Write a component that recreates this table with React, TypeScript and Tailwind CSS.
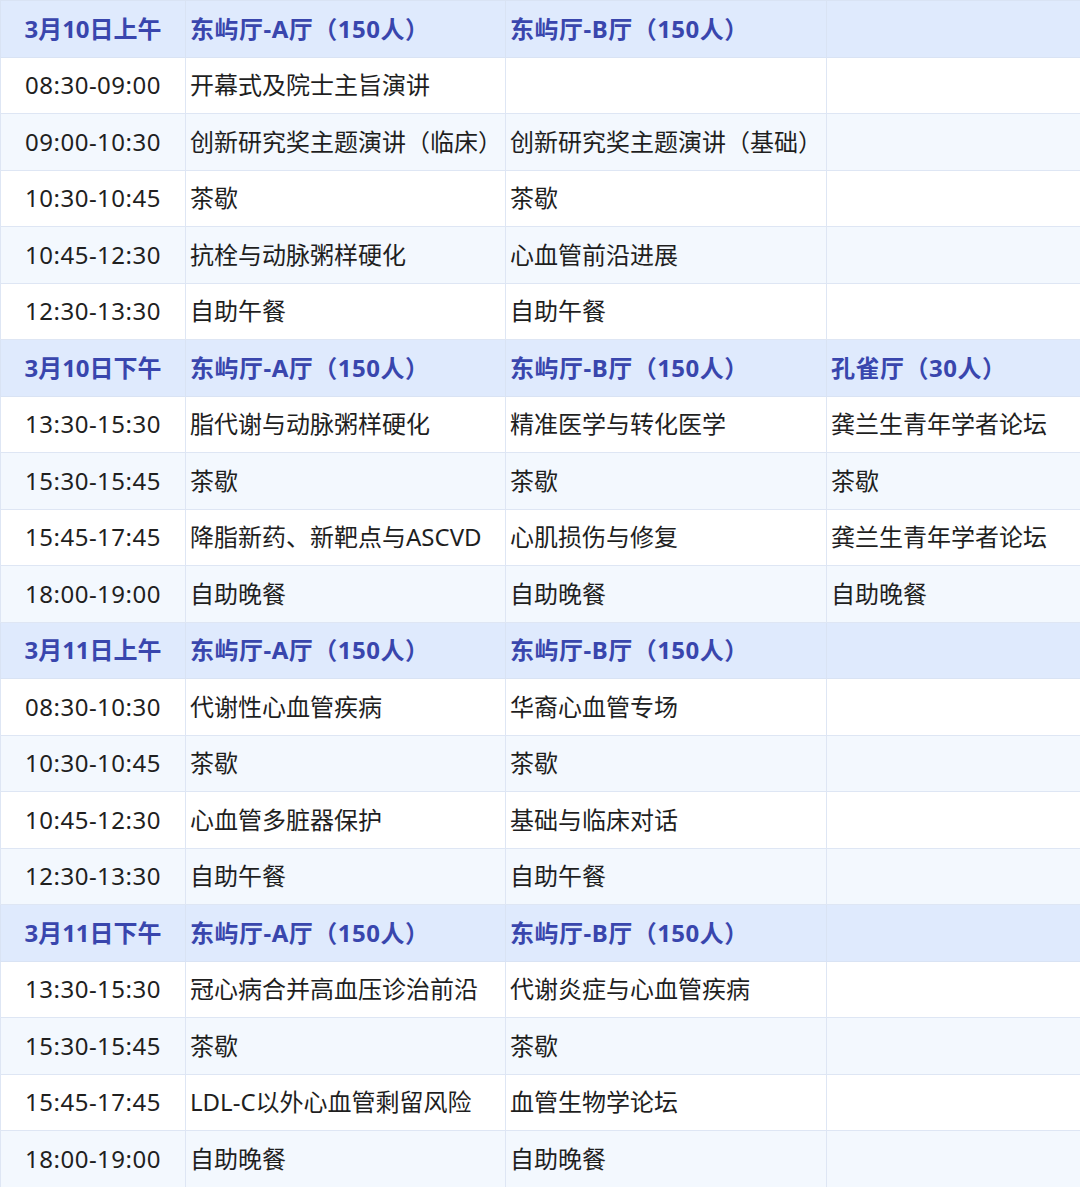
type Row = [string, string, string, string];

type Section = {
  head: Row;
  rows: Row[];
};

const sections: Section[] = [
  {
    head: ['3月10日上午', '东屿厅-A厅（150人）', '东屿厅-B厅（150人）', ''],
    rows: [
      ['08:30-09:00', '开幕式及院士主旨演讲', '', ''],
      ['09:00-10:30', '创新研究奖主题演讲（临床）', '创新研究奖主题演讲（基础）', ''],
      ['10:30-10:45', '茶歇', '茶歇', ''],
      ['10:45-12:30', '抗栓与动脉粥样硬化', '心血管前沿进展', ''],
      ['12:30-13:30', '自助午餐', '自助午餐', ''],
    ],
  },
  {
    head: ['3月10日下午', '东屿厅-A厅（150人）', '东屿厅-B厅（150人）', '孔雀厅（30人）'],
    rows: [
      ['13:30-15:30', '脂代谢与动脉粥样硬化', '精准医学与转化医学', '龚兰生青年学者论坛'],
      ['15:30-15:45', '茶歇', '茶歇', '茶歇'],
      ['15:45-17:45', '降脂新药、新靶点与ASCVD', '心肌损伤与修复', '龚兰生青年学者论坛'],
      ['18:00-19:00', '自助晚餐', '自助晚餐', '自助晚餐'],
    ],
  },
  {
    head: ['3月11日上午', '东屿厅-A厅（150人）', '东屿厅-B厅（150人）', ''],
    rows: [
      ['08:30-10:30', '代谢性心血管疾病', '华裔心血管专场', ''],
      ['10:30-10:45', '茶歇', '茶歇', ''],
      ['10:45-12:30', '心血管多脏器保护', '基础与临床对话', ''],
      ['12:30-13:30', '自助午餐', '自助午餐', ''],
    ],
  },
  {
    head: ['3月11日下午', '东屿厅-A厅（150人）', '东屿厅-B厅（150人）', ''],
    rows: [
      ['13:30-15:30', '冠心病合并高血压诊治前沿', '代谢炎症与心血管疾病', ''],
      ['15:30-15:45', '茶歇', '茶歇', ''],
      ['15:45-17:45', 'LDL-C以外心血管剩留风险', '血管生物学论坛', ''],
      ['18:00-19:00', '自助晚餐', '自助晚餐', ''],
    ],
  },
];

export default function App() {
  return (
    <div className="w-[1080px] h-[1187px] bg-white overflow-hidden font-['Noto_Sans','Noto_Sans_CJK_SC',sans-serif]">
      <table className="w-[1080px] table-fixed border-collapse">
        <colgroup>
          <col className="w-[185px]" />
          <col className="w-[320px]" />
          <col className="w-[321px]" />
          <col className="w-[254px]" />
        </colgroup>
        <tbody>
          {sections.map((s, si) => (
            <SectionRows key={si} section={s} />
          ))}
        </tbody>
      </table>
    </div>
  );
}

function SectionRows({ section }: { section: Section }) {
  return (
    <>
      <tr className="h-[56.5px] bg-[#dfeafd]">
        {section.head.map((t, i) => (
          <td
            key={i}
            className={
              'border border-[#d9e3f4] p-0 text-[24px] font-bold text-[#3946ad] whitespace-nowrap ' +
              (i === 0 ? 'text-center' : 'pl-[4px] tracking-[0.5px]')
            }
          >
            {t}
          </td>
        ))}
      </tr>
      {section.rows.map((r, ri) => (
        <tr key={ri} className={'h-[56.5px] ' + (ri % 2 === 0 ? 'bg-white' : 'bg-[#f3f8fe]')}>
          {r.map((t, i) => (
            <td
              key={i}
              className={
                'border border-[#dee6f4] p-0 text-[24px] text-[#1f1f1f] whitespace-nowrap ' +
                (i === 0 ? 'text-center tracking-[0.5px]' : 'pl-[4px]')
              }
            >
              {t}
            </td>
          ))}
        </tr>
      ))}
    </>
  );
}
